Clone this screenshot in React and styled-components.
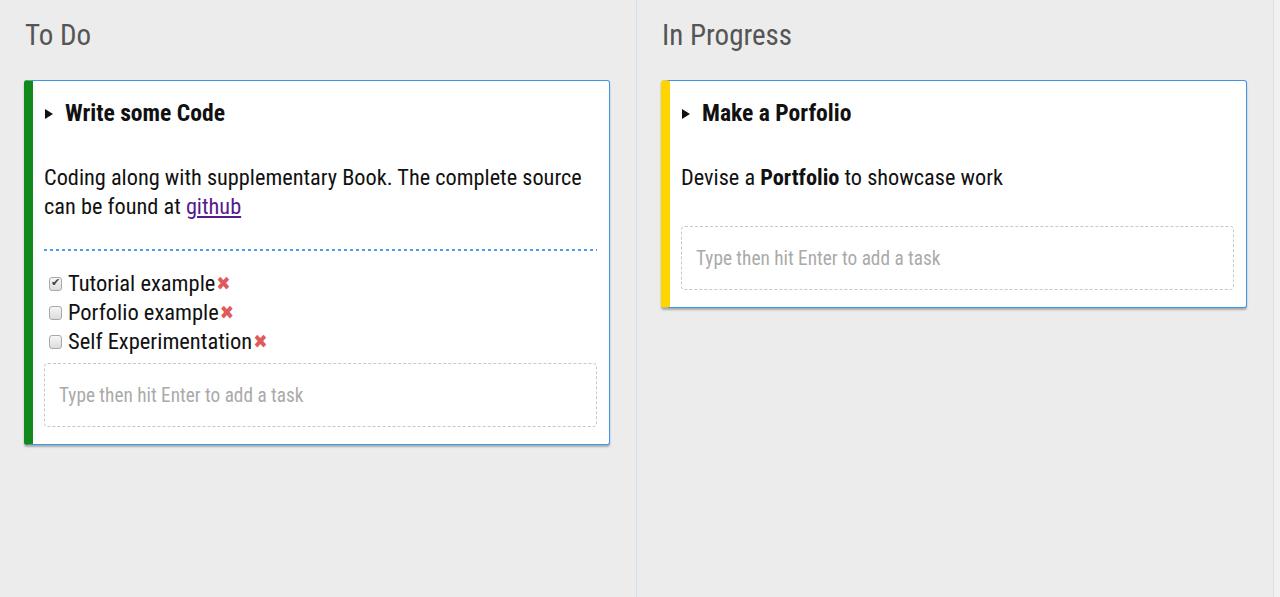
import React from 'react'
import styled, { createGlobalStyle } from 'styled-components'

const GlobalStyle = createGlobalStyle`
  html, body {
    margin: 0;
    padding: 0;
    background: #f1f1f1;
    font-family: Roboto, "Liberation Sans", sans-serif;
    font-stretch: condensed;
    color: #111;
  }
  * { box-sizing: border-box; }
`;

const lanes = [
    {
        title: 'To Do',
        notes: [
            {
                title: 'Write some Code',
                color: '#12891c',
                description: (
                    <>Coding along with supplementary Book. The complete source can be found at <a href="#github">github</a></>
                ),
                tasks: [
                    { name: 'Tutorial example', done: true },
                    { name: 'Porfolio example', done: false },
                    { name: 'Self Experimentation', done: false },
                ],
                focus: true,
            },
        ],
    },
    {
        title: 'In Progress',
        notes: [
            {
                title: 'Make a Porfolio',
                color: '#ffd400',
                description: <>Devise a <b>Portfolio</b> to showcase work</>,
                tasks: [],
            },
        ],
    },
];

const Note = ({ note }) => {
    return (
        <Card $accent={note.color}>
            <Summary>
                <Arrow />
                {note.title}
            </Summary>
            <Description $hasTasks={note.tasks.length > 0}>{note.description}</Description>
            {note.tasks.length > 0 && (
                <>
                    <Divider />
                    <Tasks>
                        {note.tasks.map(task => (
                            <Task key={task.name}>
                                <Check type="checkbox" defaultChecked={task.done} />
                                {task.name}
                                <Remove>✖</Remove>
                            </Task>
                        ))}
                    </Tasks>
                </>
            )}
            <AddTask placeholder="Type then hit Enter to add a task" autoFocus={note.focus} />
        </Card>
    )
}

const App = () => {
    return (
        <>
            <GlobalStyle />
            <Board>
                {lanes.map(lane => (
                    <Lane key={lane.title}>
                        <LaneTitle>{lane.title}</LaneTitle>
                        {lane.notes.map(note => (
                            <Note key={note.title} note={note} />
                        ))}
                    </Lane>
                ))}
            </Board>
        </>
    )
}

const Board = styled.div`
    display: flex;
    min-height: 100vh;
`;

const Lane = styled.div`
    flex: 0 0 637px;
    padding: 0 26px 0 24px;
    background: #ececec;
    border-right: 1px solid #d4e0ec;
`;

const LaneTitle = styled.h2`
    margin: 19px 0 28px 1px;
    font-size: 29px;
    line-height: 33px;
    font-weight: normal;
    color: #555;
`;

const Card = styled.div`
    background: white;
    border: 1px solid #3a97ee;
    border-left: 9px solid ${props => props.$accent};
    border-radius: 3px;
    box-shadow: 0 2px 2px rgba(0, 0, 0, 0.28);
    padding: 18px 12px 17px 11px;
`;

const Summary = styled.div`
    display: flex;
    align-items: center;
    font-size: 23.6px;
    line-height: 29px;
    font-weight: bold;
`;

const Arrow = styled.span`
    width: 0;
    height: 0;
    border-top: 5px solid transparent;
    border-bottom: 5px solid transparent;
    border-left: 8px solid #111;
    margin: 0 12px 0 1px;
`;

const Description = styled.p`
    margin: 35px 0 ${props => (props.$hasTasks ? '28px' : '34px')};
    font-size: 22.3px;
    line-height: 29px;

    a {
        color: #551a8b;
    }
`;

const Divider = styled.div`
    height: 2px;
    background: repeating-linear-gradient(to right, #4a9ff0 0 3px, transparent 3px 6px);
    margin-bottom: 18px;
`;

const Tasks = styled.ul`
    list-style: none;
    margin: 0 0 7px;
    padding: 0;
`;

const Task = styled.li`
    display: flex;
    align-items: center;
    font-size: 22.5px;
    line-height: 29px;
`;

const Check = styled.input`
    appearance: none;
    width: 13px;
    height: 14px;
    margin: 0 6px 0 5px;
    border: 1px solid #a8a8a8;
    border-radius: 3px;
    background: linear-gradient(#f6f6f6, #dcdcdc);
    position: relative;

    &:checked::after {
        content: '✔';
        position: absolute;
        left: 1px;
        top: -2px;
        font-family: "DejaVu Sans", sans-serif;
        font-size: 11px;
        color: #444;
    }
`;

const Remove = styled.span`
    font-family: "DejaVu Sans", sans-serif;
    font-size: 19px;
    line-height: 1;
    color: #e05b5b;
    margin-left: 1px;
`;

const AddTask = styled.input`
    display: block;
    width: 100%;
    height: 64px;
    padding: 0 14px;
    border: 1px dashed #c8c8c8;
    border-radius: 4px;
    font-family: inherit;
    font-stretch: condensed;
    font-size: 19.3px;
    color: #333;
    outline: none;

    &::placeholder {
        color: #aaa;
    }
`;

export default App
